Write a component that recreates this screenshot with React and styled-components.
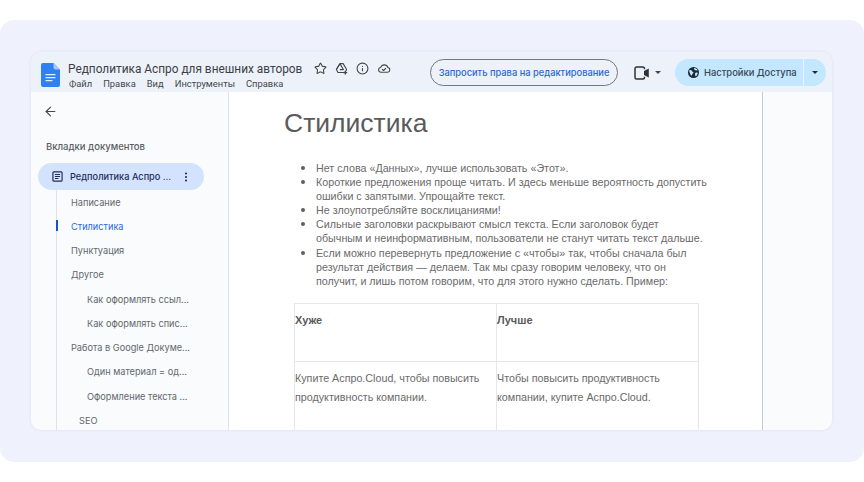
import { createGlobalStyle } from "styled-components";
import styled from "styled-components";
import { ArrowLeft, Star, Info, MoreVertical } from "lucide-react";

const GlobalStyle = createGlobalStyle`
  html, body {
    margin: 0;
    padding: 0;
    background: #ffffff;
    font-family: "Roboto", "Liberation Sans", sans-serif;
  }
`;

const TABS = [
  { label: "Написание", level: 0 },
  { label: "Стилистика", level: 0, active: true },
  { label: "Пунктуация", level: 0 },
  { label: "Другое", level: 0 },
  { label: "Как оформлять ссыл...", level: 2 },
  { label: "Как оформлять спис...", level: 2 },
  { label: "Работа в Google Докуме...", level: 0 },
  { label: "Один материал = од...", level: 2 },
  { label: "Оформление текста ...", level: 2 },
  { label: "SEO", level: 1 },
];

const POINTS = [
  "Нет слова «Данных», лучше использовать «Этот».",
  "Короткие предложения проще читать. И здесь меньше вероятность допустить ошибки с запятыми. Упрощайте текст.",
  "Не злоупотребляйте восклицаниями!",
  "Сильные заголовки раскрывают смысл текста. Если заголовок будет обычным и неинформативным, пользователи не станут читать текст дальше.",
  "Если можно перевернуть предложение с «чтобы» так, чтобы сначала был результат действия — делаем. Так мы сразу говорим человеку, что он получит, и лишь потом говорим, что для этого нужно сделать. Пример:",
];

const DocsLogo = () => (
  <svg width="19" height="24" viewBox="0 0 19 24">
    <path d="M2 0h10.5L19 6.5V22a2 2 0 0 1-2 2H2a2 2 0 0 1-2-2V2a2 2 0 0 1 2-2z" fill="#2f80f3" />
    <path d="M12.5 0L19 6.5h-4.6a1.9 1.9 0 0 1-1.9-1.9z" fill="#a6c8fa" />
    <path d="M4.5 11h10v1.3h-10zM4.5 14h10v1.3h-10zM4.5 17h7v1.3h-7z" fill="#e3eefd" />
  </svg>
);

const DriveIcon = () => (
  <svg width="13" height="13" viewBox="0 0 24 24" fill="none" stroke="#444746" strokeWidth="2" strokeLinejoin="round">
    <path d="M9 3h6l6.5 11-3 5.5H5.5l-3-5.5z" />
    <path d="M9 3l6.5 11H9" />
    <path d="M2.5 14L8 5" />
    <path d="M19 16v7M15.5 19.5h7" strokeWidth="2.4" stroke="#444746" />
  </svg>
);

const CloudIcon = () => (
  <svg width="14" height="13" viewBox="0 0 24 24" fill="none" stroke="#444746" strokeWidth="2" strokeLinejoin="round" strokeLinecap="round">
    <path d="M6.5 19a4.5 4.5 0 0 1-.6-8.96A7 7 0 0 1 19.2 10.1 4.5 4.5 0 0 1 18.5 19z" />
    <path d="M9 13.5l2.2 2.2 4-4" />
  </svg>
);

const VideoIcon = () => (
  <svg width="16" height="14" viewBox="0 0 16 14" fill="none">
    <path d="M10.5 3.2V2.6A1.6 1.6 0 0 0 9 1H2.6A1.6 1.6 0 0 0 1 2.6v8.8A1.6 1.6 0 0 0 2.6 13H9a1.6 1.6 0 0 0 1.5-1.6v-.6" stroke="#303133" strokeWidth="1.5" />
    <path d="M10 5l4.8-2.6v9.2L10 9z" fill="#303133" />
  </svg>
);

const GlobeIcon = () => (
  <svg width="11" height="11" viewBox="0 0 24 24">
    <circle cx="12" cy="12" r="12" fill="#1f2a37" />
    <path d="M3 7c3-1 5 0 6 2s3 1 3 3-3 2-3 5-3 1-4-2-3-5-2-8zM14 2c3 0 6 2 7 5-2 1-3 0-5 0s-4-3-2-5zM16 13c2-1 4-1 5 0 0 3-2 6-4 7-2-1-2-5-1-7z" fill="#c2e7ff" />
  </svg>
);

const Caret = ({ color = "#444746" }) => (
  <CaretShape $color={color} />
);

const DocIcon = () => (
  <svg width="11" height="11" viewBox="0 0 12 12" fill="none">
    <rect x="1" y="1" width="10" height="10" rx="1" stroke="#1f2d5a" strokeWidth="1.3" />
    <path d="M3.2 3.9h5.6M3.2 6h5.6M3.2 8.1h3.8" stroke="#1f2d5a" strokeWidth="1.1" />
  </svg>
);

const App = () => {
  return (
    <>
      <GlobalStyle />
      <Page>
        <Panel>
          <Window>
            <Header>
              <LogoSlot>
                <DocsLogo />
              </LogoSlot>
              <TitleBlock>
                <TitleRow>
                  <DocTitle>Редполитика Аспро для внешних авторов</DocTitle>
                  <TitleIcons>
                    <Star size={13} color="#444746" strokeWidth={2} />
                    <DriveIcon />
                    <Info size={13} color="#444746" strokeWidth={2} />
                    <CloudIcon />
                  </TitleIcons>
                </TitleRow>
                <Menu>
                  <span>Файл</span>
                  <span>Правка</span>
                  <span>Вид</span>
                  <span>Инструменты</span>
                  <span>Справка</span>
                </Menu>
              </TitleBlock>
              <Actions>
                <RequestButton>Запросить права на редактирование</RequestButton>
                <MeetButton>
                  <VideoIcon />
                  <Caret />
                </MeetButton>
                <ShareGroup>
                  <ShareMain>
                    <GlobeIcon />
                    Настройки Доступа
                  </ShareMain>
                  <ShareArrow>
                    <Caret color="#1f2a37" />
                  </ShareArrow>
                </ShareGroup>
              </Actions>
            </Header>
            <Body>
              <Sidebar>
                <BackRow>
                  <ArrowLeft size={15} color="#444746" strokeWidth={1.7} />
                </BackRow>
                <SidebarTitle>Вкладки документов</SidebarTitle>
                <CurrentTab>
                  <DocIcon />
                  <CurrentLabel>Редполитика Аспро ...</CurrentLabel>
                  <MoreVertical size={12} color="#1f2d5a" strokeWidth={2.2} />
                </CurrentTab>
                <TabList>
                  {TABS.map((tab) => (
                    <TabItem key={tab.label} $level={tab.level} $active={tab.active}>
                      {tab.label}
                    </TabItem>
                  ))}
                </TabList>
              </Sidebar>
              <Canvas>
                <Sheet>
                  <Heading>Стилистика</Heading>
                  <Points>
                    {POINTS.map((point) => (
                      <Point key={point}>{point}</Point>
                    ))}
                  </Points>
                  <Table>
                    <HeadCell>Хуже</HeadCell>
                    <HeadCell>Лучше</HeadCell>
                    <BodyCell>Купите Аспро.Cloud, чтобы повысить продуктивность компании.</BodyCell>
                    <BodyCell>Чтобы повысить продуктивность компании, купите Аспро.Cloud.</BodyCell>
                  </Table>
                </Sheet>
              </Canvas>
              <RightRail />
            </Body>
          </Window>
        </Panel>
      </Page>
    </>
  );
};

export default App;

const Page = styled.div`
  width: 864px;
  height: 482px;
  padding: 20px 0;
  box-sizing: border-box;
  overflow: hidden;
`;

const Panel = styled.div`
  height: 442px;
  padding: 32px 32px 32px 31px;
  box-sizing: border-box;
  background: #eff2fd;
  border-radius: 14px;
`;

const Window = styled.div`
  height: 378px;
  display: flex;
  flex-direction: column;
  border-radius: 10px;
  overflow: hidden;
  box-shadow: 0 0 3px rgba(90, 100, 140, 0.14);
`;

const Header = styled.header`
  flex: 0 0 40px;
  display: flex;
  align-items: flex-start;
  background: #edf2fa;
  color: #444746;
`;

const LogoSlot = styled.div`
  width: 37px;
  padding: 11px 0 0 10px;
  box-sizing: border-box;
`;

const TitleBlock = styled.div`
  padding-top: 8px;
`;

const TitleRow = styled.div`
  display: flex;
  align-items: center;
  height: 17px;
`;

const DocTitle = styled.div`
  font-size: 11.85px;
  color: #3c4043;
  white-space: nowrap;
`;

const TitleIcons = styled.div`
  display: flex;
  align-items: center;
  gap: 8px;
  margin-left: 12px;
`;

const Menu = styled.nav`
  display: flex;
  gap: 11px;
  margin-top: 1px;
  padding-left: 1px;
  font-size: 9.4px;
  color: #444746;
`;

const Actions = styled.div`
  display: flex;
  align-items: center;
  margin-left: auto;
  padding: 7px 6px 0 0;
`;

const RequestButton = styled.button`
  width: 188px;
  height: 27px;
  padding: 0;
  border: 1px solid #747775;
  border-radius: 14px;
  background: transparent;
  color: #2b68d4;
  font: 500 9.3px "Inter", sans-serif;
  white-space: nowrap;
`;

const MeetButton = styled.div`
  display: flex;
  align-items: center;
  gap: 5px;
  margin: 0 14px 0 16px;
`;

const CaretShape = styled.span`
  width: 0;
  height: 0;
  border-left: 3px solid transparent;
  border-right: 3px solid transparent;
  border-top: 3px solid ${(p) => p.$color};
`;

const ShareGroup = styled.div`
  display: flex;
  height: 27px;
  gap: 1px;
`;

const ShareMain = styled.div`
  width: 128px;
  padding-left: 13px;
  box-sizing: border-box;
  display: flex;
  align-items: center;
  gap: 5px;
  background: #c2e7ff;
  border-radius: 14px 0 0 14px;
  color: #3a4652;
  font: 500 9.4px "Inter", sans-serif;
  white-space: nowrap;
`;

const ShareArrow = styled.div`
  width: 22px;
  display: flex;
  align-items: center;
  justify-content: center;
  background: #c2e7ff;
  border-radius: 0 14px 14px 0;
`;

const Body = styled.div`
  flex: 1;
  min-height: 0;
  display: flex;
`;

const Sidebar = styled.aside`
  width: 198px;
  flex: none;
  box-sizing: border-box;
  background: #f9fbfd;
  border-right: 1px solid #dfe2e6;
  overflow: hidden;
`;

const BackRow = styled.div`
  height: 15px;
  padding: 12px 0 0 12px;
  display: flex;
`;

const SidebarTitle = styled.div`
  margin: 22px 0 0 15px;
  font: 500 9.5px/12px "Inter", sans-serif;
  color: #5a5e63;
`;

const CurrentTab = styled.div`
  width: 166px;
  height: 27px;
  margin: 10px 0 0 7px;
  padding: 0 12px 0 14px;
  box-sizing: border-box;
  display: flex;
  align-items: center;
  background: #d3e3fd;
  border-radius: 14px;
`;

const CurrentLabel = styled.span`
  flex: 1;
  margin-left: 7px;
  font: 500 9.2px "Inter", sans-serif;
  color: #1f2d5a;
  white-space: nowrap;
`;

const TabList = styled.div`
  margin: 0 0 0 25px;
  border-left: 1px solid #dfe2e6;
`;

const TabItem = styled.div`
  position: relative;
  height: 24.25px;
  display: flex;
  align-items: center;
  padding-left: ${(p) => 14 + p.$level * 8}px;
  font: 400 9.2px "Inter", sans-serif;
  color: ${(p) => (p.$active ? "#2b6ad6" : "#63676c")};
  white-space: nowrap;

  ${(p) =>
    p.$active &&
    `
    &::before {
      content: "";
      position: absolute;
      left: -1px;
      top: 6px;
      width: 2px;
      height: 11px;
      background: #0b57d0;
    }
  `}
`;

const Canvas = styled.main`
  width: 533px;
  flex: none;
  background: #ffffff;
  border-right: 1px solid #c7c9cc;
  overflow: hidden;
`;

const Sheet = styled.div`
  padding: 0 54px 0 55px;
  color: #6a6a6a;
  font-family: "Liberation Sans", Arial, sans-serif;
`;

const Heading = styled.h1`
  margin: 0;
  padding-top: 14px;
  font-size: 26.5px;
  font-weight: 400;
  line-height: 34px;
  color: #5a5a5a;
`;

const Points = styled.ul`
  margin: 21px 0 0;
  padding: 0 0 0 32px;
  list-style: none;
  font-size: 10.72px;
  line-height: 14.1px;
`;

const Point = styled.li`
  position: relative;

  &::before {
    content: "";
    position: absolute;
    left: -15px;
    top: 5px;
    width: 4px;
    height: 4px;
    border-radius: 50%;
    background: #5f5f5f;
  }
`;

const Table = styled.div`
  display: grid;
  width: fit-content;
  grid-template-columns: 202px 202px;
  grid-template-rows: 58px 90px;
  margin: 15px 0 0 10px;
  border-top: 1px solid #e4e7f0;
  border-left: 1px solid #e4e7f0;
`;

const HeadCell = styled.div`
  padding: 8px 0 0 0;
  border-right: 1px solid #e4e7f0;
  border-bottom: 1px solid #e4e7f0;
  font-size: 11px;
  line-height: 16px;
  font-weight: 700;
  color: #5a5a5a;
`;

const BodyCell = styled.div`
  padding: 7px 8px 0 0;
  border-right: 1px solid #e4e7f0;
  font-size: 10.72px;
  line-height: 19px;
`;

const RightRail = styled.div`
  flex: 1;
  background: #f9fbfd;
`;
